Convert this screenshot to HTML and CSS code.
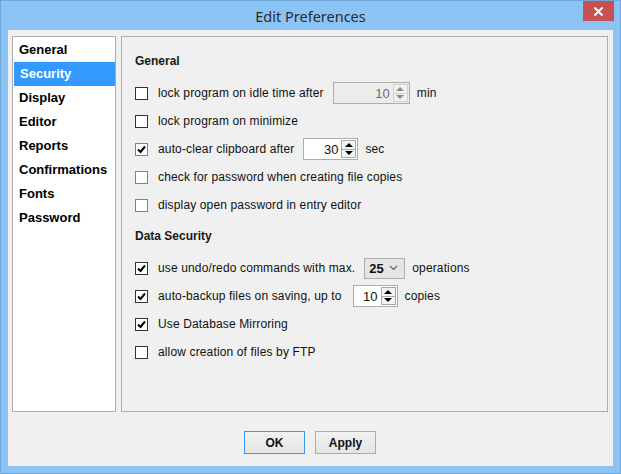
FILE: index.html
```html
<!DOCTYPE html>
<html>
<head>
<meta charset="utf-8">
<link rel="stylesheet" href="styles.css">
</head>
<body>
<div class="window">
  <div class="titlebar">
    <span></span>
    <span class="title">Edit Preferences</span>
    <div class="close"><svg width="11" height="9" viewBox="0 0 11 9"><path d="M1.5 0.5 L9.5 8.5 M9.5 0.5 L1.5 8.5" stroke="#fff" stroke-width="2"/></svg></div>
  </div>
  <div class="client">
    <div class="main">
      <ul class="nav">
        <li>General</li>
        <li class="sel">Security</li>
        <li>Display</li>
        <li>Editor</li>
        <li>Reports</li>
        <li>Confirmations</li>
        <li>Fonts</li>
        <li>Password</li>
      </ul>
      <div class="panel">
        <div class="heading">General</div>
        <div class="row">
          <span class="cb"></span>
          <span class="lbl">lock program on idle time after</span>
          <span class="spin disabled w77"><span class="num">10</span><span class="arrows"><span class="up"></span><span class="down"></span></span></span>
          <span class="unit">min</span>
        </div>
        <div class="row">
          <span class="cb"></span>
          <span class="lbl">lock program on minimize</span>
        </div>
        <div class="row">
          <span class="cb blue"><svg width="11" height="11" viewBox="0 0 11 11"><path d="M2 5.5 L4.5 8 L9 2.5" fill="none" stroke="#000" stroke-width="2"/></svg></span>
          <span class="lbl">auto-clear clipboard after</span>
          <span class="spin w55"><span class="num">30</span><span class="arrows"><span class="up"></span><span class="down"></span></span></span>
          <span class="unit">sec</span>
        </div>
        <div class="row">
          <span class="cb blue"></span>
          <span class="lbl">check for password when creating file copies</span>
        </div>
        <div class="row">
          <span class="cb blue"></span>
          <span class="lbl">display open password in entry editor</span>
        </div>
        <div class="heading second">Data Security</div>
        <div class="row">
          <span class="cb"><svg width="11" height="11" viewBox="0 0 11 11"><path d="M2 5.5 L4.5 8 L9 2.5" fill="none" stroke="#000" stroke-width="2"/></svg></span>
          <span class="lbl">use undo/redo commands with max.</span>
          <span class="combo"><span class="cval">25</span><svg width="9" height="6" viewBox="0 0 9 6"><path d="M1 1 L4.5 4.5 L8 1" fill="none" stroke="#666" stroke-width="1.2"/></svg></span>
          <span class="unit">operations</span>
        </div>
        <div class="row">
          <span class="cb"><svg width="11" height="11" viewBox="0 0 11 11"><path d="M2 5.5 L4.5 8 L9 2.5" fill="none" stroke="#000" stroke-width="2"/></svg></span>
          <span class="lbl">auto-backup files on saving, up to</span>
          <span class="spin w45 wide-gap"><span class="num">10</span><span class="arrows"><span class="up"></span><span class="down"></span></span></span>
          <span class="unit">copies</span>
        </div>
        <div class="row">
          <span class="cb"><svg width="11" height="11" viewBox="0 0 11 11"><path d="M2 5.5 L4.5 8 L9 2.5" fill="none" stroke="#000" stroke-width="2"/></svg></span>
          <span class="lbl">Use Database Mirroring</span>
        </div>
        <div class="row">
          <span class="cb"></span>
          <span class="lbl">allow creation of files by FTP</span>
        </div>
      </div>
    </div>
    <div class="buttons">
      <button class="btn default">OK</button>
      <button class="btn">Apply</button>
    </div>
  </div>
</div>
</body>
</html>
```
FILE: styles.css
```css
* { box-sizing: border-box; }
html, body { margin: 0; padding: 0; }
body { width: 621px; height: 474px; overflow: hidden; font-family: "Liberation Sans", Arial, sans-serif; }

.window {
  width: 621px; height: 474px;
  background: #8bc4f4;
  border: 1px solid #6ea7dc;
  padding: 0 7px 7px 7px;
  display: flex; flex-direction: column;
}
.titlebar {
  height: 29px; flex: none;
  display: grid; grid-template-columns: 1fr auto 1fr;
  margin: 0 -1px 0 -1px;
}
.title {
  font-family: "Noto Sans", "Open Sans", sans-serif;
  font-size: 14.5px; color: #2b2b2b;
  padding-top: 6px; line-height: 18px;
}
.close {
  justify-self: end;
  width: 31px; height: 20px;
  background: #c75050;
  display: flex; align-items: center; justify-content: center;
}
.client {
  flex: 1;
  background: #f0f0f0;
  padding: 6px 5px 0 4px;
  display: flex; flex-direction: column;
}
.main { display: flex; gap: 5px; height: 376px; flex: none; }
.nav {
  list-style: none; margin: 0;
  width: 104px; flex: none;
  background: #fff; border: 1px solid #acacac;
  padding: 1px 0 0 1px;
}
.nav li {
  height: 24px; line-height: 24px;
  padding-left: 5px;
  font-weight: bold; font-size: 13px; color: #000;
}
.nav li.sel { background: #3399ff; color: #fff; padding-left: 6px; }

.panel {
  flex: 1;
  border: 1px solid #acacac;
  background: #f0f0f0;
  padding: 10px 12px 0 13px;
}
.heading {
  height: 28px; line-height: 28px;
  font-weight: bold; font-size: 12px; color: #1a1a1a;
  margin-bottom: 4px;
}
.heading.second { margin-top: 3px; }
.row {
  height: 28px; display: flex; align-items: center;
  font-size: 12px; letter-spacing: 0.14px; color: #111;
}
.cb {
  width: 13px; height: 13px; flex: none;
  border: 1px solid #333; background: #fff;
  margin-right: 10px;
  display: flex; align-items: center; justify-content: center;
}
.cb.blue { border-color: #4a8fd6; }
.cb svg { display: block; }
.lbl { white-space: nowrap; }
.unit { margin-left: 7px; white-space: nowrap; }

.spin {
  height: 22px; flex: none; margin-left: 9px;
  border: 1px solid #acacac; background: #fff;
  display: flex; align-items: center; justify-content: flex-end;
  padding-right: 1px;
}
.spin.wide-gap { margin-left: 11px; }
.spin.w77 { width: 77px; }
.spin.w55 { width: 55px; }
.spin.w45 { width: 45px; }
.spin .num { font-size: 13px; margin-right: 3px; letter-spacing: 0; }
.spin.disabled { background: #ececec; }
.spin.disabled .num { color: #6d6d6d; }
.arrows { display: flex; flex-direction: column; width: 15px; height: 18px; }
.arrows span {
  flex: 1; border: 1px solid #a9a9a9; background: #f3f3f3;
  display: flex; align-items: center; justify-content: center;
}
.arrows .up { border-bottom: none; }
.arrows .up::after {
  content: ""; border-left: 4px solid transparent; border-right: 4px solid transparent;
  border-bottom: 4px solid #000;
}
.arrows .down::after {
  content: ""; border-left: 4px solid transparent; border-right: 4px solid transparent;
  border-top: 4px solid #000;
}
.spin.disabled .arrows span { border-color: #cfcfcf; background: #f0f0f0; }
.spin.disabled .arrows .up::after { border-bottom-color: #8a8a8a; }
.spin.disabled .arrows .down::after { border-top-color: #8a8a8a; }

.combo {
  width: 41px; height: 21px; flex: none; margin-left: 9px;
  border: 1px solid #acacac; background: #e5e5e5;
  display: flex; align-items: center; justify-content: space-between;
  padding: 0 6px 0 4px;
}
.cval { font-weight: bold; font-size: 13px; letter-spacing: 0; }
.combo svg { display: block; }

.buttons {
  display: flex; justify-content: center; gap: 10px;
  margin-top: 19px;
}
.btn {
  width: 61px; height: 23px; padding: 0;
  font-family: "Liberation Sans", Arial, sans-serif;
  font-weight: bold; font-size: 12px; color: #111;
  background: linear-gradient(#f2f2f2, #e4e4e4);
  border: 1px solid #acacac;
}
.btn.default { border-color: #3399ff; }
```
